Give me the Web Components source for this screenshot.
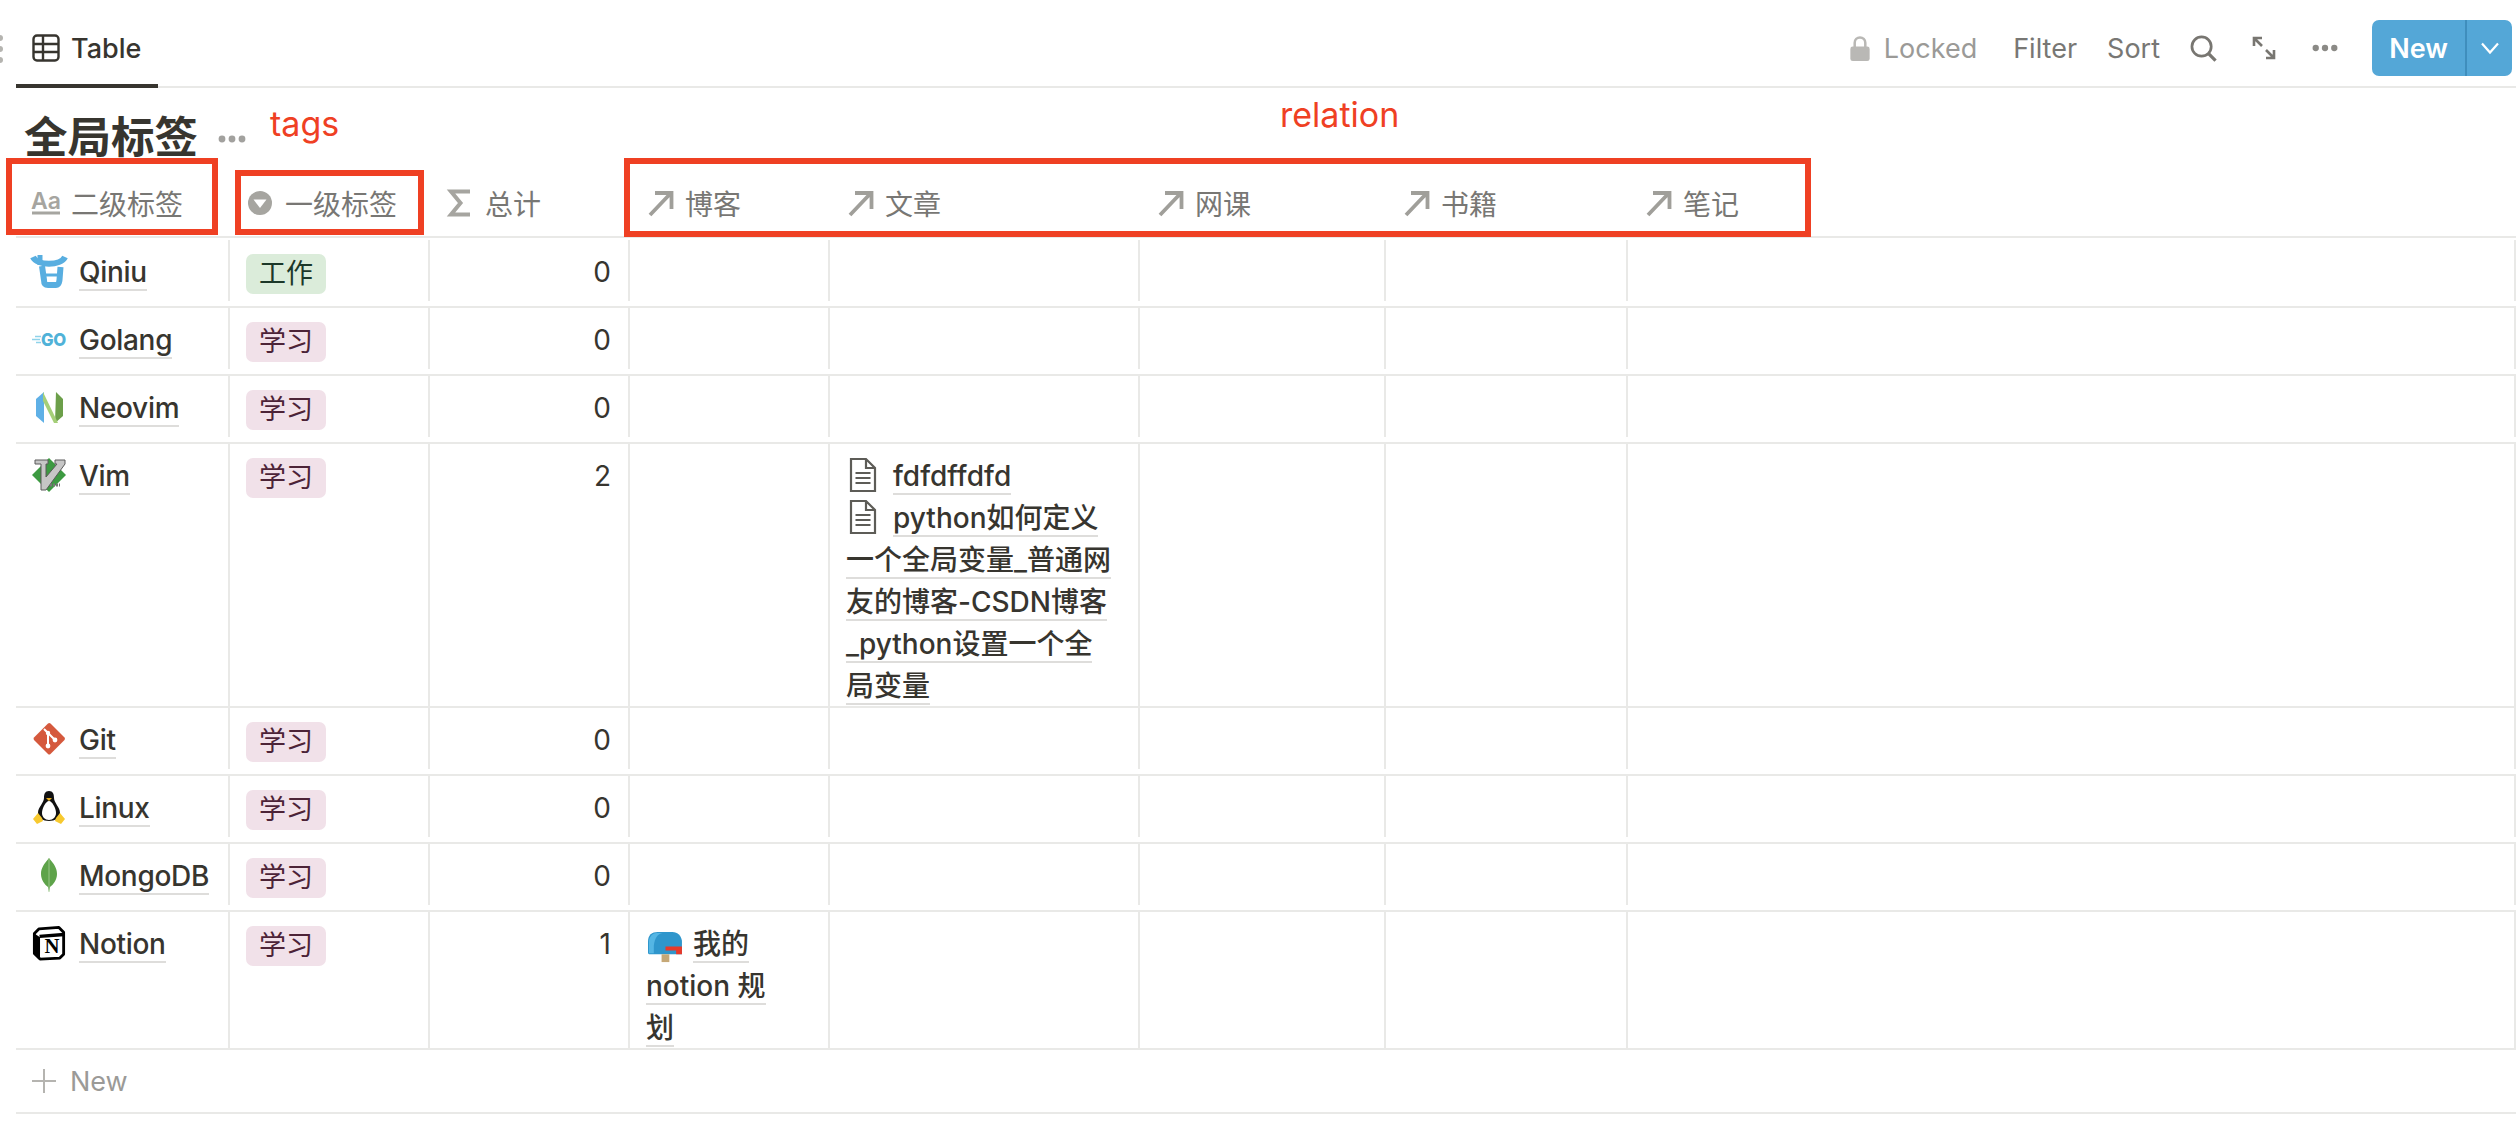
<!DOCTYPE html>
<html lang="zh">
<head>
<meta charset="utf-8">
<title>全局标签</title>
<style>
  html, body { margin: 0; background: #fff; overflow: hidden; }
  body { font: 28px Inter, "Noto Sans CJK SC", sans-serif; color: #37352f; }
</style>
</head>
<body>
<db-page>
  <db-toolbar></db-toolbar>
  <db-title>全局标签</db-title>

  <db-row head>
    <db-head icon="text">二级标签</db-head>
    <db-head icon="select">一级标签</db-head>
    <db-head icon="sigma">总计</db-head>
    <db-head icon="arrow">博客</db-head>
    <db-head icon="arrow">文章</db-head>
    <db-head icon="arrow">网课</db-head>
    <db-head icon="arrow">书籍</db-head>
    <db-head icon="arrow">笔记</db-head>
    <span></span>
  </db-row>

  <db-row>
    <db-cell><page-link tight icon="qiniu">Qiniu</page-link></db-cell>
    <db-cell><tag-pill color="green">工作</tag-pill></db-cell>
    <db-cell num>0</db-cell>
    <db-cell></db-cell><db-cell></db-cell><db-cell></db-cell><db-cell></db-cell><db-cell></db-cell><span></span>
  </db-row>
  <db-row>
    <db-cell><page-link tight icon="golang">Golang</page-link></db-cell>
    <db-cell><tag-pill>学习</tag-pill></db-cell>
    <db-cell num>0</db-cell>
    <db-cell></db-cell><db-cell></db-cell><db-cell></db-cell><db-cell></db-cell><db-cell></db-cell><span></span>
  </db-row>
  <db-row>
    <db-cell><page-link tight icon="neovim">Neovim</page-link></db-cell>
    <db-cell><tag-pill>学习</tag-pill></db-cell>
    <db-cell num>0</db-cell>
    <db-cell></db-cell><db-cell></db-cell><db-cell></db-cell><db-cell></db-cell><db-cell></db-cell><span></span>
  </db-row>
  <db-row>
    <db-cell><page-link tight icon="vim">Vim</page-link></db-cell>
    <db-cell><tag-pill>学习</tag-pill></db-cell>
    <db-cell num>2</db-cell>
    <db-cell></db-cell>
    <db-cell>
      <page-link icon="doc">fdfdffdfd</page-link><br>
      <page-link icon="doc">python如何定义<br>一个全局变量_普通网<br>友的博客-CSDN博客<br>_python设置一个全<br>局变量</page-link>
    </db-cell>
    <db-cell></db-cell><db-cell></db-cell><db-cell></db-cell><span></span>
  </db-row>
  <db-row>
    <db-cell><page-link tight icon="git">Git</page-link></db-cell>
    <db-cell><tag-pill>学习</tag-pill></db-cell>
    <db-cell num>0</db-cell>
    <db-cell></db-cell><db-cell></db-cell><db-cell></db-cell><db-cell></db-cell><db-cell></db-cell><span></span>
  </db-row>
  <db-row>
    <db-cell><page-link tight icon="linux">Linux</page-link></db-cell>
    <db-cell><tag-pill>学习</tag-pill></db-cell>
    <db-cell num>0</db-cell>
    <db-cell></db-cell><db-cell></db-cell><db-cell></db-cell><db-cell></db-cell><db-cell></db-cell><span></span>
  </db-row>
  <db-row>
    <db-cell><page-link tight icon="mongo">MongoDB</page-link></db-cell>
    <db-cell><tag-pill>学习</tag-pill></db-cell>
    <db-cell num>0</db-cell>
    <db-cell></db-cell><db-cell></db-cell><db-cell></db-cell><db-cell></db-cell><db-cell></db-cell><span></span>
  </db-row>
  <db-row>
    <db-cell><page-link tight icon="notion">Notion</page-link></db-cell>
    <db-cell><tag-pill>学习</tag-pill></db-cell>
    <db-cell num>1</db-cell>
    <db-cell><page-link icon="mailbox">我的<br>notion 规<br>划</page-link></db-cell>
    <db-cell></db-cell><db-cell></db-cell><db-cell></db-cell><db-cell></db-cell><span></span>
  </db-row>

  <db-add-row>New</db-add-row>

  <!-- red annotations drawn over the screenshot -->
  <note-box style="left:6px;top:158px;width:212px;height:77px"></note-box>
  <note-box style="left:235px;top:170px;width:189px;height:65px"></note-box>
  <note-box style="left:624px;top:158px;width:1187px;height:79px"></note-box>
  <note-label style="left:270px;top:102px">tags</note-label>
  <note-label style="left:1280px;top:93px">relation</note-label>
</db-page>

<script>
// icon table, every icon is drawn in a 34 box unless it sets its own viewBox
const ICONS = {
  table: `<svg viewBox="0 0 28 28" fill="none" stroke="#37352f" stroke-width="2.4"><rect x="1.5" y="1.5" width="25" height="25" rx="3.5"/><path d="M11 1.5v25M1.5 10h25M1.5 18h25"/></svg>`,
  lock: `<svg viewBox="0 0 20 28" fill="#b9b8b5"><path d="M4.5 13V8a5.5 5.5 0 0 1 11 0v5" fill="none" stroke="#b9b8b5" stroke-width="2.6"/><rect x="0" y="12" width="20" height="15" rx="2.5"/></svg>`,
  search: `<svg viewBox="0 0 28 28" fill="none" stroke="#787671" stroke-width="2.8"><circle cx="12" cy="12" r="10"/><path d="M19 19l7.5 7.5" stroke-width="3.4"/></svg>`,
  expand: `<svg viewBox="0 0 24 24" fill="none" stroke="#787671" stroke-width="2.6"><path d="M2 10V2h8M2 2l8 8M22 14v8h-8M22 22l-8-8"/></svg>`,
  dots: `<svg viewBox="0 0 28 8" fill="#8b8a86"><circle cx="4" cy="4" r="3.4"/><circle cx="14" cy="4" r="3.4"/><circle cx="24" cy="4" r="3.4"/></svg>`,
  chevron: `<svg viewBox="0 0 18 12" fill="none" stroke="#fff" stroke-width="2.2"><path d="M1 1.5l8 9 8-9"/></svg>`,
  plus: `<svg viewBox="0 0 24 24" fill="none" stroke="#b5b4b0" stroke-width="2"><path d="M12 0v24M0 12h24"/></svg>`,
  text: `<svg viewBox="0 0 28 28"><text x="14" y="20" text-anchor="middle" font-family="Inter" font-weight="600" font-size="23" fill="#a6a5a0">Aa</text><rect y="22.500" width="28" height="3" fill="#a6a5a0"/></svg>`,
  select: `<svg viewBox="0 0 28 28"><circle cx="14" cy="14" r="12" fill="#a6a5a0"/><path d="M7.500 10.500h13l-6.500 8.500z" fill="#fff"/></svg>`,
  sigma: `<svg viewBox="0 0 28 28" fill="none" stroke="#a6a5a0" stroke-width="4"><path d="M24 2.500H5l9.500 11.500L5 25.500h19"/></svg>`,
  arrow: `<svg viewBox="0 0 28 28" fill="none" stroke="#a09f9a" stroke-width="3.8"><path d="M4 26L24 5M9 4h16.500v16"/></svg>`,
  doc: `<svg viewBox="0 0 34 34" fill="none" stroke="#5d5c57" stroke-width="2.200"><path d="M5 1h15l9 9v23H5zM20 1v9h9M9.500 15h15M9.500 20h15M9.500 25h15"/></svg>`,
  qiniu: `<svg viewBox="0 0 34 34" fill="none" stroke="#58aee0" stroke-width="6"><path d="M1 3c4 9 28 9 32 0"/><path d="M8 1v10" stroke-width="5"/><path d="M10 12l2 14c0 3 1 5 4 5h8c3 0 3-2 3.500-5l1-13" stroke-width="6"/><path d="M11 21h17" stroke-width="3"/></svg>`,
  golang: `<svg viewBox="0 0 34 34"><path d="M0 17.500h8M3 14.500h6M4 20.500h5" stroke="#8fd3ea" stroke-width="1.500"/><text x="9" y="23.500" textLength="25" lengthAdjust="spacingAndGlyphs" font-family="Inter" font-weight="800" font-size="18" fill="#50b2d8">GO</text></svg>`,
  neovim: `<svg viewBox="0 0 34 34"><path d="M4 9l8-7v31l-8-7z" fill="#5fb0e6"/><path d="M24 2l7 7v17l-8 7z" fill="#6c9f4a"/><path d="M11 2l15 31-4 0L11 11z" fill="#a5cf78"/></svg>`,
  vim: `<svg viewBox="0 0 34 34"><path d="M17 0l17 17-17 17L0 17z" fill="#3c9a41"/><path d="M3 2h13v4h-2v13L25 6h-2V2h10v4L14 32H9V6H3z" fill="#c6c6c6" stroke="#5a5a5a" stroke-width="1"/><path d="M18 27h10" stroke="#777" stroke-width="3" stroke-dasharray="2 1"/></svg>`,
  git: `<svg viewBox="0 0 34 34"><path d="M16 1.500a2 2 0 0 1 2.500 0l14 14a2 2 0 0 1 0 2.500l-14 14a2 2 0 0 1-2.500 0l-14-14a2 2 0 0 1 0-2.500z" fill="#d5593d"/><path d="M12 7l11 11M16 11v12" stroke="#fff" stroke-width="2"/><circle cx="16" cy="24" r="2.400" fill="#fff"/><circle cx="23" cy="18" r="2.400" fill="#fff"/><circle cx="16" cy="11" r="2.200" fill="#fff"/></svg>`,
  linux: `<svg viewBox="0 0 34 34"><path d="M17 1c-4 0-5 3-5 7 0 5-6 9-6 15 0 5 5 8 11 8s11-3 11-8c0-6-6-10-6-15 0-4-1-7-5-7z" fill="#111"/><path d="M17 11c-3 0-7 7-7 12 0 4 3 7 7 7s7-3 7-7c0-5-4-12-7-12z" fill="#fff"/><path d="M14 8h6l-3 3z" fill="#e8ad1f"/><path d="M1 29l5-6 4 5 1 3-6 3zM33 29l-5-6-4 5-1 3 6 3z" fill="#f7c92f"/></svg>`,
  mongo: `<svg viewBox="0 0 34 34"><path d="M17 0c5 6 8 10 8 16 0 6-4 11-7 13l-1 5-1-5c-3-2-7-7-7-13 0-6 3-10 8-16z" fill="#5ea34a"/><path d="M17 0v34" stroke="#a9cf9a" stroke-width=".8"/></svg>`,
  notion: `<svg viewBox="0 0 34 36"><path d="M1.500 8l5-5 21-1.500 5 5V30l-4 4-21 1-6-6z" fill="#fff" stroke="#000" stroke-width="3" stroke-linejoin="round"/><path d="M1.500 8l6 4v22l-6-5z" fill="#000"/><path d="M7 11l26-2" stroke="#000" stroke-width="3.500"/><text x="20" y="29" text-anchor="middle" font-family="Liberation Serif" font-weight="700" font-size="22" fill="#000">N</text></svg>`,
  mailbox: `<svg viewBox="0 0 34 34"><g transform="translate(2 6) scale(.97)"><path d="M0 22V10C0 3 4 0 10 0h15c6 0 9 4 10 9v14H1z" fill="#2f96cc"/><path d="M1 9C2 4 5 1 9 1h6c-5 1-8 5-9 13v8H1z" fill="#55b6e4"/><rect x="14" y="23" width="8" height="8" fill="#c6a877"/><path d="M18 15h17v8h-6v-4H18z" fill="#e8392a"/></g></svg>`,
};

class AppIcon extends HTMLElement {
  connectedCallback() {
    if (this.shadowRoot) return;
    const root = this.attachShadow({ mode: 'open' });
    root.innerHTML = `<style>
      :host { display: inline-block; flex: none; line-height: 0; }
      svg { display: block; width: 100%; height: 100%; overflow: visible; }
    </style>${ICONS[this.getAttribute('name')] || ''}`;
  }
}

class DbPage extends HTMLElement {
  constructor() {
    super();
    this.attachShadow({ mode: 'open' }).innerHTML = `<style>
      :host { display: block; position: relative; height: 1144px; overflow: hidden; }
    </style><slot></slot>`;
  }
}

class DbToolbar extends HTMLElement {
  constructor() {
    super();
    this.attachShadow({ mode: 'open' }).innerHTML = `<style>
      :host { display: flex; align-items: center; height: 88px; box-sizing: border-box; margin-left: 16px;
        border-bottom: 2px solid #e9e9e7; padding-right: 4px; position: relative; font-weight: 500; }
      .grip { position: absolute; left: -19px; top: 35px; width: 6px; display: grid; gap: 5px; }
      .grip i { width: 6px; height: 6px; border-radius: 50%; background: #b5b4b0; }
      .tab { display: flex; align-items: center; gap: 11px; height: 88px; width: 142px; box-sizing: border-box;
        padding: 12px 0 0 16px; border-bottom: 4px solid #37352f; margin-bottom: -2px; font-size: 27px; }
      .tab app-icon { width: 28px; height: 28px; }
      .tools { margin-left: auto; display: flex; align-items: center; color: #787774; font-weight: 400; font-size: 27px; padding-top: 10px; }
      .locked { display: flex; align-items: center; gap: 14px; color: #9b9a97; margin-right: 36px; }
      .locked app-icon { width: 20px; height: 27px; }
      .sort { margin: 0 30px; }
      .search { width: 27px; height: 27px; }
      .expand { width: 24px; height: 24px; margin-left: 35px; }
      .dots { width: 26px; height: 8px; margin: 0 34px 0 36px; }
      .new { display: flex; width: 140px; height: 56px; border-radius: 7px; background: #54a7d7; color: #fff;
        font-weight: 600; font-size: 27px; overflow: hidden; }
      .new b { font-weight: 600; width: 93px; display: flex; align-items: center; justify-content: center; border-right: 2px solid #3f8ebd; }
      .new span { flex: 1; display: flex; align-items: center; justify-content: center; }
      .new app-icon { width: 18px; height: 12px; }
    </style>
    <div class="grip"><i></i><i></i><i></i></div>
    <div class="tab"><app-icon name="table"></app-icon>Table</div>
    <div class="tools">
      <div class="locked"><app-icon name="lock"></app-icon>Locked</div>
      <div>Filter</div>
      <div class="sort">Sort</div>
      <app-icon class="search" name="search"></app-icon>
      <app-icon class="expand" name="expand"></app-icon>
      <app-icon class="dots" name="dots"></app-icon>
      <div class="new"><b>New</b><span><app-icon name="chevron"></app-icon></span></div>
    </div>`;
  }
}

class DbTitle extends HTMLElement {
  constructor() {
    super();
    this.attachShadow({ mode: 'open' }).innerHTML = `<style>
      :host { display: flex; align-items: center; height: 84px; padding: 8px 0 0 24px; box-sizing: border-box;
        font-size: 43.500px; font-weight: 700; color: #37352f; }
      app-icon { width: 28px; height: 8px; margin: 10px 0 0 20px; opacity: .8; }
    </style><slot></slot><app-icon name="dots"></app-icon>`;
  }
}

class DbRow extends HTMLElement {
  constructor() {
    super();
    this.attachShadow({ mode: 'open' }).innerHTML = `<style>
      :host { display: grid; margin-left: 16px; box-sizing: border-box; min-height: 68px;
        grid-template-columns: 214px 200px 200px 200px 310px 246px 242px 1fr;
        border-bottom: 2px solid #e9e9e7; }
      :host([head]) { height: 66px; min-height: 0; margin-bottom: 2px; }
    </style><slot></slot>`;
  }
}

class DbHead extends HTMLElement {
  constructor() {
    super();
    const icon = this.getAttribute('icon');
    this.attachShadow({ mode: 'open' }).innerHTML = `<style>
      :host { display: flex; align-items: center; gap: 11px; padding: 6px 0 0 16px; color: #787774; font-size: 28px; }
      app-icon { width: 28px; height: 28px; }
    </style><app-icon name="${icon}"></app-icon><slot></slot>`;
  }
}

class DbCell extends HTMLElement {
  constructor() {
    super();
    this.attachShadow({ mode: 'open' }).innerHTML = `<style>
      :host { display: block; box-sizing: border-box; border-right: 2px solid #e9e9e7; padding: 11px 14px 0 16px;
        margin-bottom: -1px; line-height: 42px; font-size: 28px; }
      :host([num]) { text-align: right; padding-right: 17px; }
    </style><slot></slot>`;
  }
}

class PageLink extends HTMLElement {
  constructor() {
    super();
    const icon = this.getAttribute('icon');
    this.attachShadow({ mode: 'open' }).innerHTML = `<style>
      :host { display: inline; font-weight: 500; white-space: nowrap; }
      :host([tight]) { letter-spacing: -.3px; }
      app-icon { width: 34px; height: 34px; margin-right: 13px; vertical-align: -6px; }
      span { border-bottom: 2px solid #dedddb; }
    </style><app-icon name="${icon}"></app-icon><span><slot></slot></span>`;
  }
}

class TagPill extends HTMLElement {
  constructor() {
    super();
    this.attachShadow({ mode: 'open' }).innerHTML = `<style>
      :host { display: inline-flex; align-items: center; justify-content: center; height: 40px; width: 80px; margin-top: 3px;
        border-radius: 7px; background: #f1e1e9; color: #4c2337; font-size: 27px; line-height: 40px; vertical-align: top; }
      :host([color="green"]) { background: #dbecda; color: #1c3829; }
    </style><slot></slot>`;
  }
}

class DbAddRow extends HTMLElement {
  constructor() {
    super();
    this.attachShadow({ mode: 'open' }).innerHTML = `<style>
      :host { display: flex; align-items: center; gap: 14px; height: 64px; box-sizing: border-box; margin-left: 16px;
        padding-left: 16px; border-bottom: 2px solid #e9e9e7; color: #9b9a97; font-size: 27px; }
      app-icon { width: 24px; height: 24px; }
    </style><app-icon name="plus"></app-icon><slot></slot>`;
  }
}

class NoteBox extends HTMLElement {
  constructor() {
    super();
    this.attachShadow({ mode: 'open' }).innerHTML = `<style>
      :host { position: absolute; box-sizing: border-box; border: 6px solid #ef4023; }
    </style>`;
  }
}

class NoteLabel extends HTMLElement {
  constructor() {
    super();
    this.attachShadow({ mode: 'open' }).innerHTML = `<style>
      :host { position: absolute; color: #ef4023; font-size: 34px; line-height: 44px; }
    </style><slot></slot>`;
  }
}

customElements.define('app-icon', AppIcon);
customElements.define('db-page', DbPage);
customElements.define('db-toolbar', DbToolbar);
customElements.define('db-title', DbTitle);
customElements.define('db-row', DbRow);
customElements.define('db-head', DbHead);
customElements.define('db-cell', DbCell);
customElements.define('page-link', PageLink);
customElements.define('tag-pill', TagPill);
customElements.define('db-add-row', DbAddRow);
customElements.define('note-box', NoteBox);
customElements.define('note-label', NoteLabel);
</script>
</body>
</html>
